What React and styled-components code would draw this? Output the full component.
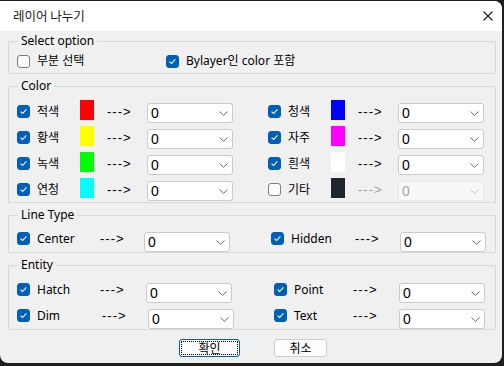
import React from "react";
import styled, { createGlobalStyle } from "styled-components";

const GlobalStyle = createGlobalStyle`
  html, body {
    margin: 0;
    padding: 0;
    background: #1f1f1f;
  }
  body {
    font-family: "Noto Sans", "Noto Sans CJK KR", sans-serif;
    font-size: 12px;
    color: #000;
  }
  #root {
    width: 504px;
    height: 366px;
    overflow: hidden;
  }
`;

const colors = [
  { name: "적색", color: "#ff0000", on: true },
  { name: "청색", color: "#0000ff", on: true },
  { name: "황색", color: "#ffff00", on: true },
  { name: "자주", color: "#ff00ff", on: true },
  { name: "녹색", color: "#00ff00", on: true },
  { name: "흰색", color: "#ffffff", on: true },
  { name: "연청", color: "#00ffff", on: true },
  { name: "기타", color: "#1f252d", on: false },
];

const Check = ({ on }) => (
  <CheckBox $on={on}>
    {on && (
      <svg width="11" height="11" viewBox="0 0 11 11">
        <path d="M2.6 5.6 L4.6 7.5 L8.4 3.4" fill="none" stroke="#fff" strokeWidth="1.1" />
      </svg>
    )}
  </CheckBox>
);

const Select = ({ disabled }) => (
  <Combo $disabled={disabled}>
    <span>0</span>
    <svg width="9" height="5" viewBox="0 0 9 5">
      <path d="M0.5 0.5 L4.5 4.3 L8.5 0.5" fill="none" stroke={disabled ? "#c4c4c4" : "#6a6a6a"} strokeWidth="1" />
    </svg>
  </Combo>
);

const MapRow = ({ label, labelW, arrowW }) => (
  <MapItem $label={labelW} $arrow={arrowW}>
    <Check on />
    <Label>{label}</Label>
    <Arrow>---&gt;</Arrow>
    <Select />
  </MapItem>
);

export default function App() {
  return (
    <>
      <GlobalStyle />
      <Window>
        <TitleBar>
          <Title>레이어 나누기</Title>
          <svg width="10" height="10" viewBox="0 0 10 10">
            <path d="M0.5 0.5 L9.5 9.5 M9.5 0.5 L0.5 9.5" stroke="#1a1a1a" strokeWidth="1.1" />
          </svg>
        </TitleBar>
        <Body>
          <Group>
            <Legend>Select option</Legend>
            <OptionRow>
              <Option $w={149}>
                <Check on={false} />
                <span>부분 선택</span>
              </Option>
              <Option>
                <Check on />
                <span>Bylayer인 color 포함</span>
              </Option>
            </OptionRow>
          </Group>

          <Group>
            <Legend>Color</Legend>
            <ColorGrid>
              {colors.map((c) => (
                <ColorItem key={c.name}>
                  <Check on={c.on} />
                  <Label>{c.name}</Label>
                  <Swatch $color={c.color} />
                  <Arrow $disabled={!c.on}>---&gt;</Arrow>
                  <Select disabled={!c.on} />
                </ColorItem>
              ))}
            </ColorGrid>
          </Group>

          <Group>
            <Legend>Line Type</Legend>
            <MapGrid $split={254} $top={9}>
              <MapRow label="Center" labelW={63} arrowW={44} />
              <MapRow label="Hidden" labelW={64} arrowW={45} />
            </MapGrid>
          </Group>

          <Group>
            <Legend>Entity</Legend>
            <MapGrid $split={257} $top={10}>
              <MapRow label="Hatch" labelW={63} arrowW={46} />
              <MapRow label="Point" labelW={59} arrowW={46} />
              <MapRow label="Dim" labelW={65} arrowW={46} />
              <MapRow label="Text" labelW={59} arrowW={46} />
            </MapGrid>
          </Group>

          <ButtonRow>
            <Button $w={61} $primary>
              <FocusRing>확인</FocusRing>
            </Button>
            <Button $w={53}>취소</Button>
          </ButtonRow>
        </Body>
      </Window>
    </>
  );
}

const Window = styled.div`
  width: 502px;
  height: 362px;
  margin-top: 1px;
  background: #f0f0f0;
  border-radius: 0 8px 8px 8px;
  overflow: hidden;
  display: flex;
  flex-direction: column;
`;

const TitleBar = styled.div`
  height: 30px;
  flex: none;
  background: #ffffff;
  display: flex;
  align-items: center;
  justify-content: space-between;
  padding: 0 9px 0 13px;
`;

const Title = styled.span`
  font-family: "Noto Sans CJK KR", sans-serif;
  font-size: 12.5px;
  line-height: 16px;
  color: #1a1a1a;
`;

const Body = styled.div`
  display: flex;
  flex-direction: column;
  gap: 4px;
  padding: 2px 6px 0 8px;
`;

const Group = styled.fieldset`
  margin: 0;
  padding: 0;
  min-width: 0;
  border: 1px solid #d9d9d9;
  border-radius: 0;
`;

const Legend = styled.legend`
  margin-left: 9px;
  padding: 0 3px;
  font-size: 12px;
  line-height: 16px;
  color: #000;
`;

const OptionRow = styled.div`
  display: flex;
  align-items: center;
  height: 20px;
  padding: 2px 0 2px 8px;
`;

const Option = styled.label`
  display: flex;
  align-items: center;
  gap: 7px;
  width: ${(p) => (p.$w ? `${p.$w}px` : "auto")};
  line-height: 14px;
`;

const CheckBox = styled.span`
  box-sizing: border-box;
  width: 13px;
  height: 13px;
  flex: none;
  border-radius: 3px;
  border: 1px solid ${(p) => (p.$on ? "#005fb8" : "#7d7d7d")};
  background: ${(p) => (p.$on ? "#005fb8" : "#fbfbfb")};
  display: flex;
  align-items: center;
  justify-content: center;
`;

const ColorGrid = styled.div`
  display: grid;
  grid-template-columns: 216px 216px;
  column-gap: 35px;
  row-gap: 3px;
  padding: 6px 0 1px 8px;
`;

const ColorItem = styled.div`
  display: grid;
  grid-template-columns: 20px 43px 27px 40px 86px;
  align-items: center;
  height: 23px;
`;

const Label = styled.span`
  font-size: 12px;
  line-height: 13px;
  white-space: nowrap;
`;

const Swatch = styled.span`
  align-self: start;
  width: 14px;
  height: 20px;
  background: ${(p) => p.$color};
`;

const Arrow = styled.span`
  font-family: "Liberation Sans", sans-serif;
  font-size: 13px;
  line-height: 13px;
  letter-spacing: 1px;
  color: ${(p) => (p.$disabled ? "#a0a0a0" : "#000")};
  white-space: nowrap;
`;

const Combo = styled.div`
  align-self: end;
  box-sizing: border-box;
  width: 86px;
  height: 20px;
  border: 1px solid ${(p) => (p.$disabled ? "#e6e6e6" : "#cacaca")};
  border-radius: 3px;
  background: ${(p) => (p.$disabled ? "#f8f8f8" : "#ffffff")};
  display: flex;
  align-items: center;
  justify-content: space-between;
  padding: 0 4px 0 3px;
  font-family: "Liberation Sans", sans-serif;
  font-size: 14px;
  color: ${(p) => (p.$disabled ? "#a8a8a8" : "#000")};

  svg {
    margin-top: 1px;
  }
`;

const MapGrid = styled.div`
  display: grid;
  grid-template-columns: ${(p) => p.$split}px auto;
  row-gap: 6px;
  padding: ${(p) => p.$top}px 0 0 8px;
`;

const MapItem = styled.div`
  display: grid;
  grid-template-columns: 20px ${(p) => p.$label}px ${(p) => p.$arrow}px 86px;
  align-items: start;
  height: 20px;
`;

const ButtonRow = styled.div`
  display: flex;
  justify-content: center;
  gap: 34px;
  margin-top: 5px;
  padding-left: 2px;
`;

const Button = styled.div`
  box-sizing: border-box;
  width: ${(p) => p.$w}px;
  height: 18px;
  border: 1px solid ${(p) => (p.$primary ? "#005fb8" : "#d0d0d0")};
  border-radius: 3px;
  background: #fdfdfd;
  display: flex;
  align-items: stretch;
  justify-content: center;
  padding: ${(p) => (p.$primary ? "1px" : "0")};
  font-family: "Noto Sans CJK KR", sans-serif;
  font-size: 12px;
  line-height: 16px;
  color: #000;
`;

const FocusRing = styled.span`
  flex: 1;
  border: 1px dotted #000;
  display: flex;
  align-items: center;
  justify-content: center;
  line-height: 12px;
`;
